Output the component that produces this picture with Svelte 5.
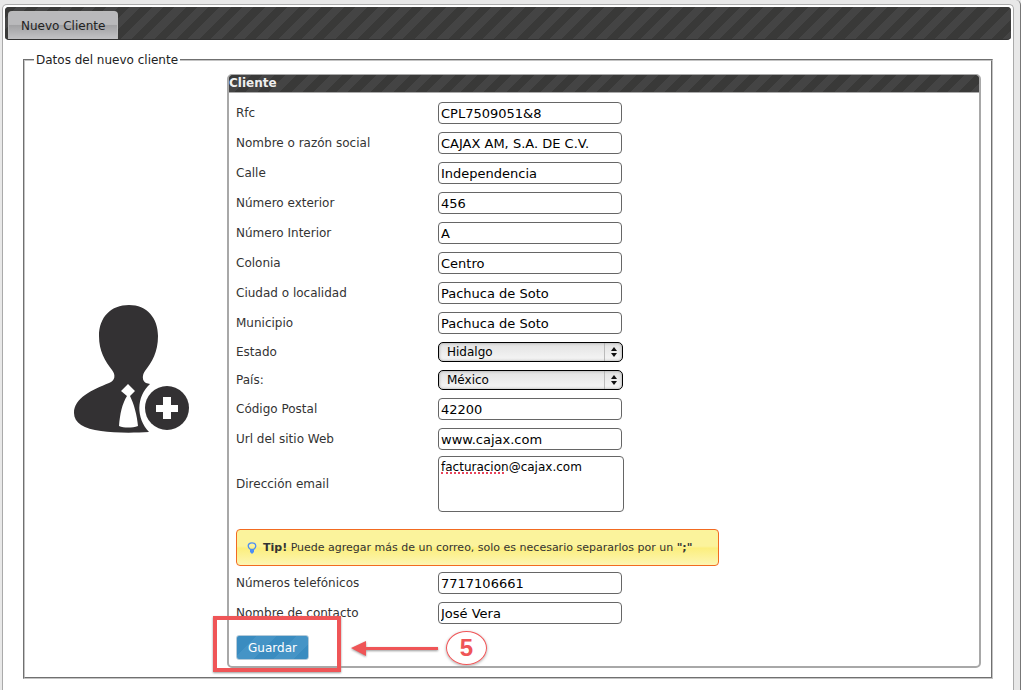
<script lang="ts">
	type Field = { id: string; label: string; value: string; kind?: 'select' | 'area' };

	const fields: Field[] = [
		{ id: 'rfc', label: 'Rfc', value: 'CPL7509051&8' },
		{ id: 'nombre', label: 'Nombre o razón social', value: 'CAJAX AM, S.A. DE C.V.' },
		{ id: 'calle', label: 'Calle', value: 'Independencia' },
		{ id: 'exterior', label: 'Número exterior', value: '456' },
		{ id: 'interior', label: 'Número Interior', value: 'A' },
		{ id: 'colonia', label: 'Colonia', value: 'Centro' },
		{ id: 'ciudad', label: 'Ciudad o localidad', value: 'Pachuca de Soto' },
		{ id: 'municipio', label: 'Municipio', value: 'Pachuca de Soto' },
		{ id: 'estado', label: 'Estado', value: 'Hidalgo', kind: 'select' },
		{ id: 'pais', label: 'País:', value: 'México', kind: 'select' },
		{ id: 'cp', label: 'Código Postal', value: '42200' },
		{ id: 'url', label: 'Url del sitio Web', value: 'www.cajax.com' },
		{ id: 'email', label: 'Dirección email', value: 'facturacion@cajax.com', kind: 'area' }
	];
	const contact: Field[] = [
		{ id: 'telefonos', label: 'Números telefónicos', value: '7717106661' },
		{ id: 'contacto', label: 'Nombre de contacto', value: 'José Vera' }
	];
</script>

{#snippet row(f: Field)}
	<div class="row">
		<label for={f.id}>{f.label}</label>
		{#if f.kind === 'select'}
			<span class="select">
				<select id={f.id}><option>{f.value}</option></select>
				<svg class="arrows" width="6" height="10" viewBox="0 0 6 10" aria-hidden="true">
					<path d="M3 0L6 4H0zM3 10L0 6H6z" fill="#111" />
				</svg>
			</span>
		{:else if f.kind === 'area'}
			<span class="area">
				<textarea id={f.id} spellcheck="false" value={f.value}></textarea>
				<span class="misspelt" aria-hidden="true"></span>
			</span>
		{:else}
			<input id={f.id} type="text" value={f.value} />
		{/if}
	</div>
{/snippet}

<div class="page">
	<main class="tabs">
		<nav class="bar striped">
			<a class="tab" href="#nuevo">Nuevo Cliente</a>
		</nav>

		<fieldset id="nuevo">
			<legend>Datos del nuevo cliente</legend>
			<div class="cols">
				<div class="picture">
					<svg width="116" height="130" viewBox="0 0 116 130" aria-hidden="true">
						<path
							fill="#333133"
							d="M55 1C73 1 84 14 84 32C84 48 78 58 71 67C68 71 68 77 72 79L76 80C62 93 62 114 75 128C60 129 40 129 27 127C10 125 0 119 0 109C0 94 18 86 35 79C41 77 42 71 38 66C31 57 25 47 25 32C25 13 37 1 55 1Z"
						/>
						<path
							fill="#fff"
							d="M54 80L61 87L56 92C60 100 63 111 64 122C58 124 50 124 45 122C46 110 48 100 53 92L47 87Z"
						/>
						<circle cx="93" cy="104" r="22" fill="#333133" />
						<path fill="#fff" d="M89 93H97V101H104V108H97V115H89V108H82V101H89Z" />
					</svg>
				</div>

				<form class="panel" onsubmit={(e) => e.preventDefault()}>
					<h2 class="striped">Cliente</h2>
					<div class="body">
						{#each fields as f (f.id)}
							{@render row(f)}
						{/each}

						<p class="tip">
							<svg width="10" height="12" viewBox="0 0 10 12" aria-hidden="true">
								<path
									d="M3.5 7.5C2 6.5 1.2 5.5 1.2 4C1.2 2 3 .8 5 .8S8.8 2 8.8 4C8.8 5.5 8 6.5 6.5 7.5Z"
									fill="none"
									stroke="#4b8ef5"
									stroke-width="1.3"
								/>
								<path d="M3 8H7V10.5H6V11.5H4V10.5H3Z" fill="#4b8ef5" />
							</svg>
							<span>
								<b>Tip!</b> Puede agregar más de un correo, solo es necesario separarlos por un
								<b>";"</b>
							</span>
						</p>

						{#each contact as f (f.id)}
							{@render row(f)}
						{/each}

						<div class="actions">
							<button type="submit">Guardar</button>
							<!-- anotación del paso 5 -->
							<div class="frame"></div>
							<div class="step">
								<svg width="88" height="20" viewBox="0 0 88 20" aria-hidden="true">
									<path d="M0 10L15 3V9H87V12H15V18Z" fill="#ef5557" />
								</svg>
								<span class="num">5</span>
							</div>
						</div>
					</div>
				</form>
			</div>
		</fieldset>
	</main>
</div>

<style>
	:global(body) {
		background: #e8e8e8;
	}
	.page {
		box-sizing: border-box;
		min-height: 100vh;
		padding: 4px 6px 0 2px;
		border-right: 1px solid #777;
		border-top-right-radius: 5px;
		overflow: hidden;
		font-family: 'DejaVu Sans', Verdana, sans-serif;
		font-size: 12px;
		line-height: 16px;
		color: #333;
	}
	.tabs {
		box-sizing: border-box;
		min-height: calc(100vh - 4px);
		padding: 2px 2px 10px;
		border: 1px solid #aaa;
		border-bottom: 0;
		border-radius: 5px 5px 0 0;
		background: #fff;
	}
	.striped {
		background: #444 repeating-linear-gradient(135deg, #393938 0 8px, #444 8px 16px);
	}
	.bar {
		box-sizing: border-box;
		display: flex;
		height: 33px;
		padding: 4px 3px 0;
		border-bottom: 1px solid #333;
		border-radius: 4px;
	}
	.tab {
		box-sizing: border-box;
		padding: 6px 12px;
		border: 1px solid #bbb;
		border-bottom: 0;
		border-radius: 4px 4px 0 0;
		background: linear-gradient(#b9b9bb 0 46%, #a2a2a4 50%, #c2c2c4);
		color: #222;
		text-decoration: none;
	}
	fieldset {
		margin: 12px 18px 0;
		padding: 6px 10px 9px 0;
		border: 2px groove #c4c4c4;
	}
	legend {
		margin-left: 9px;
		padding: 0 2px;
		color: #222;
	}
	.cols {
		display: flex;
	}
	.picture {
		box-sizing: border-box;
		flex: 0 0 202px;
		display: flex;
		align-items: center;
		justify-content: center;
		padding: 0 0 4px 12px;
	}
	.panel {
		flex: 1;
		border: 2px solid #a8a8a8;
		border-top-width: 1px;
		border-radius: 5px;
	}
	h2 {
		margin: 0;
		border-bottom: 1px solid #aaa;
		border-radius: 4px 4px 0 0;
		font-size: 12px;
		line-height: 17px;
		color: #eee;
	}
	.body {
		padding: 5px 7px;
	}
	.row {
		display: flex;
		align-items: center;
		padding: 4px 0;
	}
	.row label {
		flex: 0 0 202px;
	}
	input,
	select,
	textarea {
		box-sizing: border-box;
		margin: 0;
		border: 1px solid #666;
		border-radius: 4px;
		background: #fff;
		color: #000;
		font-family: inherit;
	}
	input {
		width: 184px;
		height: 22px;
		padding: 0 2px;
		font-size: 13px;
	}
	.select,
	.area {
		position: relative;
		display: flex;
	}
	select {
		appearance: none;
		width: 185px;
		height: 20px;
		padding: 0 24px 0 8px;
		border-color: #000;
		border-radius: 5px;
		background:
			linear-gradient(#bbb, #bbb) 165px 0 / 1px 100% no-repeat,
			linear-gradient(#e2e2e2, #f6f6f6);
		box-shadow: inset 0 0 3px #999;
		font-size: 12px;
	}
	.arrows {
		position: absolute;
		top: 5px;
		right: 6px;
	}
	textarea {
		width: 186px;
		height: 56px;
		padding: 2px;
		font-size: 12px;
		line-height: 16px;
		resize: none;
	}
	.area {
		margin: -2px 0;
	}
	.misspelt {
		position: absolute;
		top: 16px;
		left: 3px;
		width: 63px;
		border-bottom: 2px dotted #e8425a;
	}
	.tip {
		box-sizing: border-box;
		display: flex;
		align-items: center;
		gap: 6px;
		max-width: 483px;
		height: 37px;
		margin: 15px 0 2px;
		padding: 0 7px 0 10px;
		border: 1px solid #f26b21;
		border-radius: 4px;
		background: linear-gradient(#fbf39c 0 46%, #fbee7e 52%, #fdf6b4);
		font-size: 11px;
	}
	.actions {
		position: relative;
		padding: 7px 0 1px;
	}
	button {
		display: block;
		width: 73px;
		height: 25px;
		padding: 0;
		border: 1px solid #b5cbda;
		border-radius: 3px;
		background: repeating-linear-gradient(135deg, #3a8cc0 0 14px, #4594c6 14px 28px);
		color: #fff;
		font: inherit;
	}
	.frame {
		position: absolute;
		box-sizing: border-box;
		top: -12px;
		left: -23px;
		width: 128px;
		height: 56px;
		border: 4px solid #ef5557;
		box-shadow: 0 1px 2px #999;
		pointer-events: none;
	}
	.step {
		position: absolute;
		top: 3px;
		left: 115px;
		display: flex;
		align-items: center;
		gap: 7px;
	}
	.step svg {
		filter: drop-shadow(0 1px 1px #999);
	}
	.num {
		box-sizing: border-box;
		width: 41px;
		height: 34px;
		border: 1px solid #ef5557;
		border-radius: 50%;
		box-shadow: 0 1px 3px #aaa;
		color: #ef5557;
		font: bold 24px/32px 'Liberation Sans', Arial, sans-serif;
		text-align: center;
	}
</style>
